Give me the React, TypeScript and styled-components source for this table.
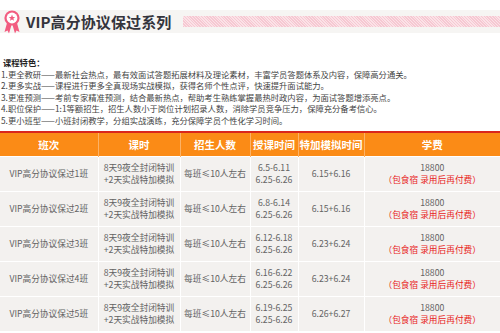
import styled, { createGlobalStyle } from "styled-components";

const GlobalStyle = createGlobalStyle`
  body {
    margin: 0;
    background: #fff;
    font-family: "Noto Sans CJK SC", "Noto Sans", sans-serif;
    overflow: hidden;
  }
`;

const features = [
  ["1.更全教研", "最新社会热点，最有效面试答题拓展材料及理论素材，丰富学员答题体系及内容，保障高分通关。"],
  ["2.更多实战", "课程进行更多全真现场实战模拟，获得名师个性点评，快速提升面试能力。"],
  ["3.更准预测", "考前专家精准预测，结合最新热点，帮助考生熟练掌握最热时政内容，为面试答题增添亮点。"],
  ["4.职位保护", "1:1等额招生，招生人数小于岗位计划招录人数，消除学员竞争压力，保障充分备考信心。"],
  ["5.更小班型", "小班封闭教学，分组实战演练，充分保障学员个性化学习时间。"],
];

const classes = [
  { name: "VIP高分协议保过1班", dates: ["6.5-6.11", "6.25-6.26"], mock: "6.15+6.16" },
  { name: "VIP高分协议保过2班", dates: ["6.8-6.14", "6.25-6.26"], mock: "6.15+6.16" },
  { name: "VIP高分协议保过3班", dates: ["6.12-6.18", "6.25-6.26"], mock: "6.23+6.24" },
  { name: "VIP高分协议保过4班", dates: ["6.16-6.22", "6.25-6.26"], mock: "6.23+6.24" },
  { name: "VIP高分协议保过5班", dates: ["6.19-6.25", "6.25-6.26"], mock: "6.26+6.27" },
];

const columns = [
  { title: "班次", width: 98 },
  { title: "课时", width: 82 },
  { title: "招生人数", width: 70 },
  { title: "授课时间", width: 48 },
  { title: "特加模拟时间", width: 66 },
  { title: "学费", width: 136 },
];

const Rosette = () => (
  <svg width="18" height="24" viewBox="0 0 18 24">
    <path d="M4 13 L1.5 22 L4.5 20.5 L6 23.5 L8.5 15 Z" fill="#f25c80" />
    <path d="M14 13 L16.5 22 L13.5 20.5 L12 23.5 L9.5 15 Z" fill="#f25c80" />
    <circle cx="9" cy="8" r="7.6" fill="#f25c80" />
    <circle cx="9" cy="8" r="5.4" fill="#fff" />
    <path
      d="M9 4.6 L9.9 6.9 L12.2 7 L10.4 8.5 L11 10.8 L9 9.5 L7 10.8 L7.6 8.5 L5.8 7 L8.1 6.9 Z"
      fill="#f25c80"
    />
  </svg>
);

const App = () => {
  return (
    <>
      <GlobalStyle />
      <TitleBar>
        <Rosette />
        <Title>VIP高分协议保过系列</Title>
        <Stripe />
      </TitleBar>
      <Features>
        <FeatureHead>课程特色：</FeatureHead>
        {features.map(([head, text]) => (
          <FeatureLine key={head}>
            {head}——{text}
          </FeatureLine>
        ))}
      </Features>
      <Table>
        <colgroup>
          {columns.map((c) => (
            <col key={c.title} style={{ width: c.width }} />
          ))}
        </colgroup>
        <thead>
          <tr>
            {columns.map((c) => (
              <HeadCell key={c.title}>{c.title}</HeadCell>
            ))}
          </tr>
        </thead>
        <tbody>
          {classes.map((row) => (
            <tr key={row.name}>
              <Cell>{row.name}</Cell>
              <Cell>
                8天9夜全封闭特训
                <br />
                +2天实战特加模拟
              </Cell>
              <Cell>每班≤10人左右</Cell>
              <Cell>
                {row.dates[0]}
                <br />
                {row.dates[1]}
              </Cell>
              <Cell>{row.mock}</Cell>
              <Cell>
                18800
                <br />
                <Note>（包食宿 录用后再付费）</Note>
              </Cell>
            </tr>
          ))}
        </tbody>
      </Table>
    </>
  );
};

const TitleBar = styled.div`
  display: flex;
  align-items: center;
  margin-top: 10px;
  height: 23px;
  padding-left: 3px;
  background: #f6f5f3;
  svg {
    flex: none;
  }
`;

const Title = styled.h1`
  margin: 0 0 0 5px;
  font-size: 15px;
  font-weight: 700;
  color: #34343c;
  white-space: nowrap;
  letter-spacing: 0.1px;
`;

const Stripe = styled.div`
  flex: 1;
  height: 11px;
  margin-left: 12px;
  background: repeating-linear-gradient(
    45deg,
    #f6c8d2 0 1px,
    #fbe2e7 1px 2px
  );
`;

const Features = styled.div`
  margin-top: 24px;
  padding-left: 1px;
  font-size: 8.3px;
  line-height: 11.6px;
  color: #444;
`;

const FeatureHead = styled.div`
  padding-left: 2px;
  font-weight: 700;
  color: #222;
`;

const FeatureLine = styled.div`
  white-space: nowrap;
`;

const Table = styled.table`
  margin-top: 4px;
  width: 500px;
  table-layout: fixed;
  border-collapse: collapse;
  border-top: 2px solid #d9261c;
`;

const HeadCell = styled.th`
  height: 23px;
  padding: 0;
  background: #fb8b16;
  color: #fff;
  font-size: 10.5px;
  font-weight: 700;
  text-align: center;
  border-left: 1px solid #fcb266;
  white-space: nowrap;
  &:first-child {
    border-left: none;
  }
`;

const Cell = styled.td`
  height: 34px;
  padding: 0;
  background: #f3f1ef;
  color: #626262;
  font-size: 8.7px;
  line-height: 12px;
  text-align: center;
  white-space: nowrap;
  border-left: 1px solid #fff;
  border-top: 1px solid #fff;
  &:first-child {
    border-left: none;
  }
`;

const Note = styled.span`
  color: #e8231b;
`;

export default App;
